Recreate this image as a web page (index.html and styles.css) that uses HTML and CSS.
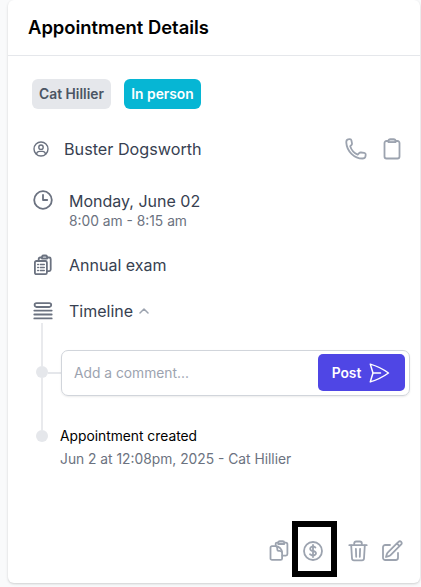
FILE: index.html
```html
<!DOCTYPE html>
<html lang="en">
<head>
    <meta charset="UTF-8">
    <meta name="viewport" content="width=device-width, initial-scale=1.0">
    <title>Appointment Details</title>
    <link rel="stylesheet" href="styles.css">
</head>
<body>
    <div class="card">
        <div class="card-header">
            <h1>Appointment Details</h1>
        </div>

        <div class="badges">
            <span class="badge badge-gray">Cat Hillier</span>
            <span class="badge badge-cyan">In person</span>
        </div>

        <div class="row patient">
            <svg class="icon icon-user" viewBox="0 0 16 16">
                <circle cx="8" cy="8" r="7"/>
                <circle cx="8" cy="6.2" r="2.2"/>
                <path d="M3.4 13c.5-1.8 1.7-2.6 3.1-2.6h3c1.4 0 2.6.8 3.1 2.6"/>
            </svg>
            <span class="name">Buster Dogsworth</span>
            <div class="contact">
                <button>
                    <svg class="icon icon-light" width="22" height="22" viewBox="0 0 22 22">
                        <path d="M1.300 4.600C1.200 2.800 1.700 1.700 3 1.400l1.700-.2c1-.1 1.500.3 1.700 1.200l.6 3c.1.8-.1 1.300-.7 1.800L5.200 8.200c1.200 3.700 3.900 6.900 7.500 8.400l1.400-1.500c.5-.5 1-.7 1.800-.6l3.300.4c1.100.2 1.600.7 1.500 1.700l-.2 1.600c-.3 1.500-1.400 2.300-3 2.300C9.300 20.500 1.800 13.200 1.300 4.600z"/>
                    </svg>
                </button>
                <button>
                    <svg class="icon icon-light" width="18" height="22" viewBox="0 0 18 22">
                        <path d="M5.500 3H3.500a2 2 0 0 0-2 2v13.500a2 2 0 0 0 2 2h11a2 2 0 0 0 2-2V5a2 2 0 0 0-2-2h-2"/>
                        <path class="clip" d="M5.500 4.200V3c0-1.100.8-1.900 1.900-1.900h3.200c1.100 0 1.900.8 1.900 1.900v1.200z"/>
                    </svg>
                </button>
            </div>
        </div>

        <div class="row date">
            <svg class="icon" width="20" height="20" viewBox="0 0 20 20">
                <circle cx="10" cy="10" r="8.800"/>
                <path d="M10 4.800V10h4.200"/>
            </svg>
            <div class="label">
                <div>Monday, June 02</div>
                <div class="time">8:00 am - 8:15 am</div>
            </div>
        </div>

        <div class="row reason">
            <svg class="icon" width="20" height="22" viewBox="0 0 20 22">
                <rect x="1.900" y="7" width="12" height="13.200" rx="1.500"/>
                <path d="M5.700 7V5c0-.9.600-1.500 1.500-1.500H9M14 3.500h2.200c.9 0 1.500.600 1.500 1.500v10.600c0 .9-.6 1.500-1.500 1.500H14"/>
                <path class="clip" d="M9 4.600V3.300c0-1 .8-1.800 1.800-1.800h1.500c1 0 1.800.8 1.800 1.800v1.300z"/>
                <path class="list" d="M4.700 10.500h.7M7.300 10.500h4M4.700 13.500h.7M7.300 13.500h4M4.700 16.500h.7M7.300 16.500h4"/>
            </svg>
            <div class="label">Annual exam</div>
        </div>

        <div class="row timeline-title">
            <svg class="icon" width="20" height="20" viewBox="0 0 20 20">
                <rect x="1.600" y="2.200" width="16.600" height="3.800" rx="1.900"/>
                <path d="M1.300 9.600h17.400M1.300 13.500h17.400M1.300 17.400h17.400"/>
            </svg>
            <div class="label">Timeline</div>
            <svg class="icon icon-light chevron" width="10" height="8" viewBox="0 0 10 8">
                <path d="M1 6l4-4 4 4"/>
            </svg>
        </div>

        <div class="timeline">
            <div class="rail">
                <span class="line line-top"></span>
                <span class="dot"></span>
                <span class="line line-middle"></span>
                <span class="dot"></span>
            </div>
            <span class="connector"></span>
            <div class="entries">
                <div class="comment">
                    <span class="placeholder">Add a comment...</span>
                    <button class="post">
                        Post
                        <svg class="icon" width="24" height="24" viewBox="0 0 24 24">
                            <path d="M6 12L3.269 3.126A59.768 59.768 0 0 1 21.485 12 59.770 59.770 0 0 1 3.270 20.876L5.999 12zm0 0h7.500"/>
                        </svg>
                    </button>
                </div>
                <div class="event">Appointment created</div>
                <div class="event-meta">Jun 2 at 12:08pm, 2025 - Cat Hillier</div>
            </div>
        </div>

        <div class="actions">
            <button class="copy">
                <svg class="icon icon-light" width="20" height="22" viewBox="0 0 20 22">
                    <path d="M6.700 5.500V3.900c0-.8.500-1.300 1.300-1.300h1M15.500 2.600h1.300c1 0 1.600.7 1.600 1.600v9.900c0 .9-.6 1.500-1.500 1.500h-3.500"/>
                    <path class="clip" d="M9.200 4V2.600c0-.9.600-1.500 1.500-1.500h3c.9 0 1.500.6 1.500 1.500V4z"/>
                    <path d="M3 6.200h3.500c3.600 0 6.600 3 6.600 6.600v5.600c0 .9-.6 1.500-1.500 1.500H3c-.9 0-1.500-.6-1.500-1.500V7.700c0-.9.600-1.500 1.500-1.500z"/>
                    <path d="M7 6.300c.9.500 1.300 1.200 1.300 2.200v1c0 .8.500 1.300 1.300 1.300h1c1 0 1.800.4 2.300 1.200"/>
                </svg>
            </button>
            <button class="billing">
                <svg class="icon icon-light" width="24" height="24" viewBox="0 0 24 24">
                    <path d="M12 6v12m-3-2.818l.879.659c1.171.879 3.070.879 4.242 0 1.172-.879 1.172-2.303 0-3.182C13.536 12.219 12.768 12 12 12c-.725 0-1.450-.220-2.003-.659-1.106-.879-1.106-2.303 0-3.182s2.900-.879 4.006 0l.415.330M21 12a9 9 0 1 1-18 0 9 9 0 0 1 18 0z"/>
                </svg>
            </button>
            <button class="trash">
                <svg class="icon icon-light" width="20" height="22" viewBox="0 0 20 22">
                    <path d="M1.300 5.200h17.400M6.200 5V3.400c0-1.200.8-1.900 1.900-1.900h3.800c1.100 0 1.900.7 1.900 1.900V5"/>
                    <path d="M3.200 5.500l.8 13c.1 1.200.9 1.900 2 1.900h8c1.100 0 1.900-.7 2-1.900l.8-13M7.900 8.800l.3 8M12.100 8.800l-.3 8"/>
                </svg>
            </button>
            <button class="edit">
                <svg class="icon icon-light" width="24" height="24" viewBox="0 0 24 24">
                    <path d="M16.862 4.487l1.687-1.688a1.875 1.875 0 1 1 2.652 2.652L10.582 16.070a4.500 4.500 0 0 1-1.897 1.130L6 18l.8-2.685a4.500 4.500 0 0 1 1.130-1.897l8.932-8.931zm0 0L19.500 7.125M18 14v4.750A2.250 2.250 0 0 1 15.750 21H5.250A2.250 2.250 0 0 1 3 18.750V8.250A2.250 2.250 0 0 1 5.250 6H10"/>
                </svg>
            </button>
        </div>
    </div>
</body>
</html>
```
FILE: styles.css
```css
* {
    box-sizing: border-box;
}

body {
    margin: 0;
    padding: 0 1px 0 8px;
    height: 587px;
    overflow: hidden;
    background-color: #f9fafb;
    font-family: Inter, sans-serif;
    color: #374151;
}

button {
    display: flex;
    align-items: center;
    justify-content: center;
    border: none;
    padding: 0;
    background: none;
    font-family: inherit;
    cursor: pointer;
}

.card {
    height: 583px;
    background-color: #fff;
    border-radius: 6px;
    box-shadow: 0 1px 3px rgba(0, 0, 0, 0.12), 0 1px 2px rgba(0, 0, 0, 0.06);
}

.card-header {
    height: 56px;
    padding: 0 0 2px 20px;
    display: flex;
    align-items: center;
    border-bottom: 1px solid #e5e7eb;
}

.card-header h1 {
    margin: 0;
    font-size: 18.4px;
    font-weight: 600;
    line-height: 26px;
    color: #000;
}

.badges {
    display: flex;
    gap: 13px;
    margin: 23px 0 0 24px;
}

.badge {
    height: 30px;
    padding-bottom: 1px;
    display: flex;
    align-items: center;
    justify-content: center;
    border-radius: 6px;
    font-size: 13.8px;
    font-weight: 600;
}

.badge-gray {
    width: 79px;
    background-color: #e5e7eb;
    color: #4b5563;
}

.badge-cyan {
    width: 77px;
    background-color: #06b6d4;
    color: #fff;
}

.icon {
    flex: none;
    display: block;
    fill: none;
    stroke: #6b7280;
    stroke-width: 1.8;
    stroke-linecap: round;
    stroke-linejoin: round;
}

.icon-light {
    stroke: #9ca3af;
}

.icon-user {
    width: 16px;
    height: 16px;
    margin-right: 15px;
    stroke-width: 1.4;
}

.clip {
    fill: #d1d5db;
}

.list {
    stroke-width: 1.4;
}

.row {
    display: flex;
    align-items: center;
    padding-left: 25px;
    font-size: 16px;
    line-height: 24px;
}

.label {
    margin-left: 16px;
}

.patient {
    height: 24px;
    margin-top: 28px;
}

.name {
    font-size: 16.2px;
}

.contact {
    display: flex;
    gap: 16px;
    margin: 0 19px 0 auto;
}

.date {
    align-items: flex-start;
    margin-top: 28px;
}

.date .icon {
    margin-top: 1px;
}

.time {
    font-size: 13.8px;
    line-height: 16px;
    color: #6b7280;
}

.reason {
    height: 24px;
    margin-top: 24px;
}

.timeline-title {
    height: 24px;
    margin-top: 22px;
}

.chevron {
    margin-left: 6px;
    stroke-width: 1.5;
}

.timeline {
    height: 145px;
    display: flex;
    padding-left: 28px;
}

.rail {
    width: 12px;
    display: flex;
    flex-direction: column;
    align-items: center;
}

.line {
    width: 2px;
    background-color: #e9eaed;
}

.line-top {
    height: 43px;
}

.line-middle {
    height: 52px;
}

.dot {
    width: 12px;
    height: 12px;
    border-radius: 50%;
    background-color: #e5e7eb;
}

.connector {
    width: 13px;
    height: 2px;
    margin-top: 49px;
    background-color: #e5e7eb;
}

.comment {
    width: 349px;
    height: 46px;
    margin-top: 27px;
    padding: 0 4px 1px 12px;
    display: flex;
    align-items: center;
    justify-content: space-between;
    border: 1px solid #d1d5db;
    border-radius: 7px;
    box-shadow: 0 1px 2px rgba(0, 0, 0, 0.08);
}

.placeholder {
    font-size: 13.8px;
    color: #9ca3af;
}

.post {
    width: 87px;
    height: 37px;
    gap: 6px;
    border-radius: 5px;
    background-color: #4f46e5;
    color: #fff;
    font-size: 13.8px;
    font-weight: 600;
}

.post .icon {
    stroke: #fff;
    stroke-width: 1.5;
}

.event {
    margin: 29px 0 0 -1px;
    font-size: 13.8px;
    line-height: 23px;
    color: #000;
}

.event-meta {
    margin-left: -1px;
    font-size: 13.8px;
    line-height: 23px;
    color: #6b7280;
}

.actions {
    display: flex;
    align-items: center;
    justify-content: flex-end;
    margin-top: 53px;
    padding-right: 16px;
}

.actions .icon {
    margin-top: 3px;
}

.billing {
    width: 45px;
    height: 56px;
    margin: 0 11px 0 3px;
    padding-right: 4px;
    border: 6px solid #000;
}

.trash {
    margin-right: 12px;
}
```
